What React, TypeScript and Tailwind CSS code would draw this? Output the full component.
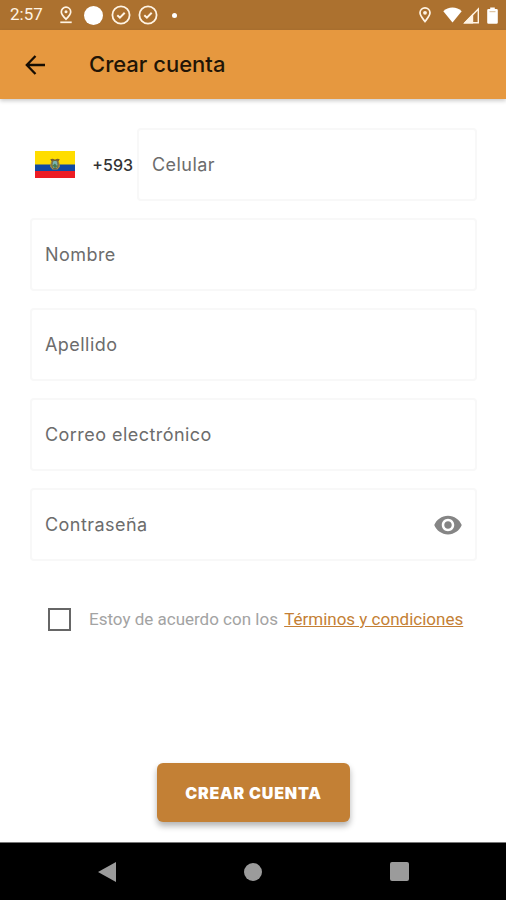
import { useState } from "react";
import { MdVisibility } from "react-icons/md";

const fields = [
  { id: "nombre", label: "Nombre", type: "text" },
  { id: "apellido", label: "Apellido", type: "text" },
  { id: "correo", label: "Correo electrónico", type: "email" },
];

const inputStyle =
  "h-[73px] w-full min-w-0 rounded border-2 border-[#f8f8f8] bg-white px-[13px] text-lg tracking-wide text-[#333] outline-none placeholder:text-[#6c6c6c]";

const CheckCircle = () => (
  <svg viewBox="0 0 20 20" className="size-5" fill="none" stroke="#fff4e4" strokeWidth="1.8">
    <circle cx="10" cy="10" r="8.6" />
    <path d="M6.3 10.2l2.6 2.5 4.8-4.9" strokeWidth="2" />
  </svg>
);

const StatusBar = () => (
  <div className="flex h-[30px] items-center justify-between bg-[#ac712f] pr-2 pl-[10px] text-[#fff4e4]">
    <div className="flex items-center">
      <span className="w-12 font-[Roboto,sans-serif] text-[17px]">2:57</span>
      <svg viewBox="0 0 16 18" className="mr-[10px] h-[18px] w-4" fill="none" stroke="currentColor" strokeWidth="1.7">
        <path d="M8 13.2C5.200 10.400 3.300 8.400 3.300 5.900a4.700 4.700 0 0 1 9.400 0c0 2.500-1.900 4.500-4.700 7.300z" />
        <circle cx="8" cy="5.800" r="1.500" fill="currentColor" stroke="none" />
        <path d="M2.300 16.300h11.400" />
      </svg>
      <span className="mr-2 size-[19px] rounded-full bg-white" />
      <CheckCircle />
      <span className="w-[7px]" />
      <CheckCircle />
      <span className="ml-[14px] size-[5px] rounded-full bg-white" />
    </div>
    <div className="flex items-center">
      <svg viewBox="0 0 14 18" className="mr-[11px] h-[18px] w-[14px]" fill="none" stroke="currentColor" strokeWidth="1.700">
        <path d="M7 15.500C4.500 12.300 2 9.700 2 6.800a5 5 0 0 1 10 0c0 2.900-2.500 5.500-5 8.700z" />
        <circle cx="7" cy="6.800" r="1.900" fill="currentColor" stroke="none" />
      </svg>
      <svg viewBox="0 0 19 16" className="mr-px h-4 w-[19px]" fill="#fff">
        <path d="M.3 4.200C2.800 1.800 6 .6 9.500.6s6.700 1.200 9.200 3.600L9.500 15.600z" />
      </svg>
      <svg viewBox="0 0 17 17" className="mr-[7px] size-[17px]" fill="none" stroke="currentColor" strokeWidth="1.400">
        <path d="M2 15.700L15.300 2v13.700z" />
        <path d="M2 15.700l7.500-7.700v7.700z" fill="currentColor" />
      </svg>
      <svg viewBox="0 0 11 17" className="h-[17px] w-[11px]" fill="#fff">
        <path d="M3.200 2V.5h4.600V2h1.700q1.300 0 1.300 1.300v12.200q0 1.300-1.300 1.300h-8Q.2 16.800.2 15.500V3.300Q.2 2 1.500 2z" />
        <path d="M2.500 4.700h6" stroke="#d9b98f" />
      </svg>
    </div>
  </div>
);

const EcuadorFlag = () => (
  <svg viewBox="0 0 40 27" className="h-[27px] w-10 shrink-0" role="img" aria-label="Ecuador">
    <path fill="#ffdd00" d="M0 0h40v14H0z" />
    <path fill="#1149a3" d="M0 13.500h40v7H0z" />
    <path fill="#ed1c24" d="M0 20h40v7H0z" />
    <path d="M15.300 8.300q2.200-1.500 4.700.5 2.500-2 4.700-.5l-1.200 2.400h-7z" fill="#77602f" />
    <path d="M16 10.500l-1 5 2.500 3h5l2.500-3-1-5z" fill="#a88e42" />
    <ellipse cx="20" cy="13.500" rx="3" ry="4.200" fill="#79b4b0" stroke="#6b5a35" />
    <path d="M17.600 14.500l2.300-2 2.400 2.700-2.300 2z" fill="#467a4d" />
  </svg>
);

export default function App() {
  const [showPassword, setShowPassword] = useState(false);

  return (
    <div className="flex min-h-screen flex-col bg-white font-[Inter,sans-serif]">
      <StatusBar />

      <header className="flex h-[69px] items-center bg-[#e6983f] px-6 shadow-[0_2px_4px_rgba(0,0,0,0.2)]">
        <button type="button" aria-label="Volver" className="mr-[42px]">
          <svg viewBox="0 0 23 24" className="h-6 w-[23px]" fill="none" stroke="#160d03" strokeWidth="2.300">
            <path d="M21 12H3M11.500 3L2.800 12l8.700 9" />
          </svg>
        </button>
        <h1 className="text-[22px] font-medium text-[#211406]">Crear cuenta</h1>
      </header>

      <form className="flex flex-1 flex-col pt-[29px] pr-[29px] pl-[30px]" onSubmit={(e) => e.preventDefault()}>
        <div className="flex flex-col gap-[17px]">
          <div className="flex items-center">
            <div className="flex w-[107px] shrink-0 items-center justify-between pr-1 pl-[5px]">
              <EcuadorFlag />
              <label htmlFor="celular" className="text-base font-medium text-[#333]">
                +593
              </label>
            </div>
            <input id="celular" type="tel" aria-label="Celular" placeholder="Celular" className={inputStyle} />
          </div>

          {fields.map(({ id, label, type }) => (
            <input key={id} id={id} type={type} aria-label={label} placeholder={label} className={inputStyle} />
          ))}

          <div className="relative">
            <input
              type={showPassword ? "text" : "password"}
              aria-label="Contraseña"
              placeholder="Contraseña"
              className={inputStyle}
            />
            <button
              type="button"
              aria-label="Mostrar contraseña"
              onClick={() => setShowPassword(!showPassword)}
              className="absolute inset-y-0 right-[14px] text-[#858585]"
            >
              <MdVisibility size={30} />
            </button>
          </div>
        </div>

        <div className="mt-[46px] flex items-center pl-[18px] font-[Roboto,sans-serif] text-[17px]">
          <input
            id="terminos"
            type="checkbox"
            className="mr-[18px] size-[23px] shrink-0 appearance-none border-2 border-[#666] checked:bg-[#c47f35]"
          />
          <p className="whitespace-nowrap text-[#a3a3a3]">
            <label htmlFor="terminos">Estoy de acuerdo con los </label>
            <a href="#terminos" className="ml-0.5 text-[#c47f35] underline">
              Términos y condiciones
            </a>
          </p>
        </div>

        <button
          type="submit"
          className="mx-auto mt-auto mb-5 h-[59px] rounded-md bg-[#c38035] px-7 text-base font-black tracking-wider text-white shadow-[0_4px_6px_rgba(0,0,0,0.3)]"
        >
          CREAR CUENTA
        </button>
      </form>

      <nav className="grid h-[58px] grid-cols-3 items-center justify-items-center border-t border-[#777] bg-black px-[34px]">
        <button type="button" aria-label="Atrás">
          <svg viewBox="0 0 18 20" className="h-5 w-[18px]" fill="#9b9b9b">
            <path d="M18 0v20L0 10z" />
          </svg>
        </button>
        <button type="button" aria-label="Inicio" className="size-[18px] rounded-full bg-[#9b9b9b]" />
        <button type="button" aria-label="Recientes" className="size-[19px] rounded-xs bg-[#9b9b9b]" />
      </nav>
    </div>
  );
}
